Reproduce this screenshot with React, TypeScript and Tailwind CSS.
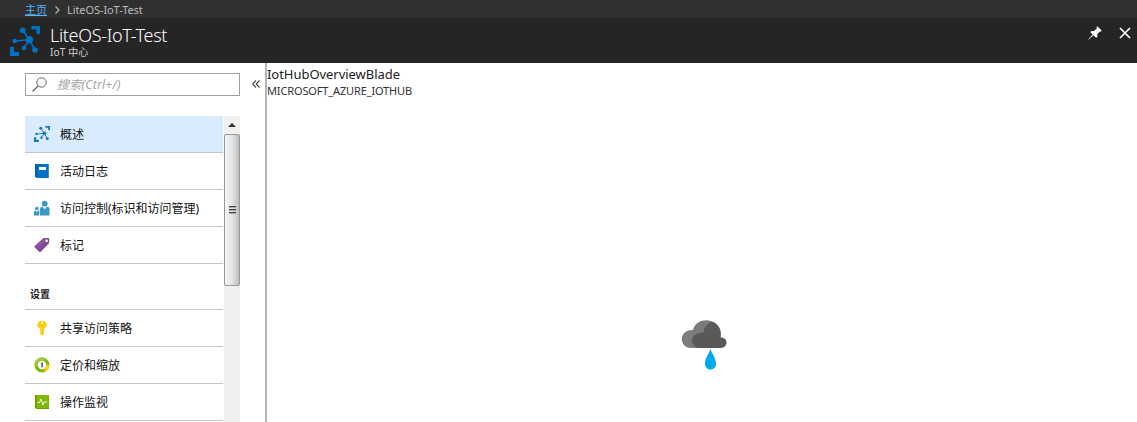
import type { ReactNode } from 'react';

function HubIcon({ className = '', light = false }: { className?: string; light?: boolean }) {
  return (
    <svg viewBox="0 0 30 30" className={className} fill={light ? '#1b78c5' : '#0072c6'}>
      <path d="M21.500 0H30v8h-3.500V3.500h-5zM0 21h4v5h5v4H0z" />
      <path d="M12.700 4.300 19.300 13.700 4.700 15M19.300 13.700 25 24M19.300 13.700 14 22" fill="none" stroke="#0072c6" strokeWidth="1.600" />
      <circle cx="12.700" cy="4.300" r="2.900" />
      <circle cx="19.500" cy="13.700" r="3.600" />
      <circle cx="4.700" cy="15" r="2.300" />
      <circle cx="14" cy="22" r="2.300" />
      <circle cx="25" cy="24" r="2.800" />
    </svg>
  );
}

function BookIcon() {
  return (
    <svg viewBox="0 0 16 16" className="h-4 w-4">
      <path d="M1 1h14v14H2.500L1 13.500z" fill="#0072c6" />
      <path d="M1 1h1.500v13H1z" fill="#005a9e" />
      <path d="M14.500 1v14" stroke="#3b8fd0" />
      <path d="M5 4h7v3H5z" fill="#fff" />
    </svg>
  );
}

function PeopleIcon() {
  return (
    <svg viewBox="0 0 16 16" className="h-4 w-4" fill="#3999c6">
      <circle cx="10.700" cy="3.700" r="2.900" />
      <path d="M6 15.500V9q0-2 2-2h1l1.700 2.500L12.500 7H14q1.500 0 1.500 2v6.500z" />
      <circle cx="2.800" cy="8.500" r="1.800" />
      <path d="M0 15.500V12q0-1.500 1.500-1.500L3 12l1-1.500h1.300v5z" />
    </svg>
  );
}

function TagIcon() {
  return (
    <svg viewBox="0 0 16 16" className="h-4 w-4">
      <path d="M9.500 1H14q1.300 0 1.300 1.400L15 6.300 6.800 14.800q-.8.8-1.600 0L.8 10.600q-.8-.8 0-1.600z" fill="#804998" />
      <path d="m8.500 2-7.700 7q-.8.8 0 1.600L3 12.500 14 1z" fill="#9665ac" opacity=".5" />
      <circle cx="12.700" cy="3.700" r="1.300" fill="#fff" />
    </svg>
  );
}

function KeyIcon() {
  return (
    <svg viewBox="0 0 16 16" className="h-4 w-4">
      <path d="M8 .8c5.500 0 6.500 6 2 7.900v5.200l-2 1.800-1.800-1.700V8.700C1.500 6.800 2.500.8 8 .8z" fill="#fcd116" />
      <circle cx="8" cy="2.800" r="1" fill="#fff" />
      <path d="M5 6h6" stroke="#f0b71a" strokeWidth=".8" />
      <path d="M8.500 8v6" stroke="#efbd25" strokeWidth=".8" />
    </svg>
  );
}

function PricingIcon() {
  return (
    <svg viewBox="0 0 16 16" className="h-4 w-4">
      <circle cx="8" cy="8" r="5.900" fill="#fff" stroke="#7fba00" strokeWidth="3.200" />
      <path d="M13.900 8A5.900 5.900 0 0 1 10.500 13.300" fill="none" stroke="#fcd116" strokeWidth="3.200" />
      <path d="M2.100 9A5.900 5.900 0 0 1 11 2.900" fill="none" stroke="#a0ca46" strokeWidth="3.200" />
      <path d="M9 6.500H7.500v1.300h1.200v1.500H7M8 5.500v5" fill="none" stroke="#333" strokeWidth=".7" />
    </svg>
  );
}

function MonitorIcon() {
  return (
    <svg viewBox="0 0 16 16" className="h-4 w-4">
      <path d="M1 1h14v14H2.500L1 13.500z" fill="#7fba00" />
      <path d="M1 1h1.500v13H1zM2 14h13v1H2.500z" fill="#6a9c00" />
      <path d="M3.500 8.500h2L7 5l2 6 1.200-3H13" fill="none" stroke="#fff" />
    </svg>
  );
}

function NavItem({ icon, label, active = false }: { icon: ReactNode; label: string; active?: boolean }) {
  return (
    <li className={`flex h-[37px] items-center gap-[10px] border-b border-[#c8c8c8] pl-[9px] ${active ? 'bg-[#d9ecff]' : 'bg-white'}`}>
      {icon}
      <span className="whitespace-nowrap pt-[2px] text-[12px] leading-[18px] text-[#111]">{label}</span>
    </li>
  );
}

function Scrollbar() {
  return (
    <div className="flex w-4 shrink-0 flex-col bg-[#f0f0f0]">
      <div className="flex h-[18px] items-center justify-center">
        <svg viewBox="0 0 8 4" className="h-1 w-2"><path d="M4 0 8 4H0z" fill="#333" /></svg>
      </div>
      <div className="flex h-[152px] flex-col items-center justify-center gap-[1px] rounded-[2px] border border-[#979797] bg-linear-to-r from-[#f5f5f5] via-[#e4e4e6] to-[#bcbdc1]">
        <i className="h-[2px] w-[7px] border-b border-[#aaa] bg-[#444]" />
        <i className="h-[2px] w-[7px] border-b border-[#aaa] bg-[#444]" />
        <i className="h-[2px] w-[7px] border-b border-[#aaa] bg-[#444]" />
      </div>
    </div>
  );
}

function Cloud() {
  return (
    <svg viewBox="0 0 46 52" className="ml-[414px] mt-[221px] h-[52px] w-[46px]">
      <path d="M10 28C-2.500 27.500-2.500 9.500 12 10 15-3 36-3 39.500 10.500V28z" fill="#7a7b7d" />
      <path d="M19 28C7.500 27 8 12.500 22.500 12.500 23 8 25.500 4 30.500 1.800 37 4 41 10 39.500 17.500c8-.5 8 10.500 0 10.500z" fill="#58595b" />
      <path d="M29.500 29c1.500 5 5.500 9 5.500 14.500 0 8-11 8-11 0C24 38 28 34 29.500 29z" fill="#00abec" />
    </svg>
  );
}

export default function App() {
  return (
    <div className="flex h-[422px] w-[1137px] flex-col overflow-hidden bg-white font-['Noto_Sans','Noto_Sans_CJK_SC',sans-serif] text-[#222]">
      <nav className="flex h-[18px] shrink-0 items-center bg-[#303030] pl-[25px] pt-[2px] text-[11px] leading-4">
        <a href="#" className="text-[#55b3ff] underline">主页</a>
        <svg viewBox="0 0 5 8" className="ml-2 mr-[7px] h-2 w-[5px]"><path d="m.5.500 3.500 3.500L.5 7.500" fill="none" stroke="#bbb" strokeWidth="1.200" /></svg>
        <span className="text-[11px] tracking-[-0.08px] text-[#bbb]">LiteOS-IoT-Test</span>
      </nav>
      <header className="flex h-[45px] shrink-0 bg-[#252525] text-white">
        <HubIcon className="ml-[10px] mt-2 h-[30px] w-[30px]" />
        <div className="ml-[10px] mt-[6px]">
          <h1 className="text-[18px] font-light leading-[22px] tracking-[-0.32px]">LiteOS-IoT-Test</h1>
          <p className="text-[10px] leading-[13px] tracking-[0.15px] text-[#d0d0d0]">IoT 中心</p>
        </div>
        <div className="ml-auto mr-[6px] mt-[8px] flex items-start gap-[17px]">
          <svg viewBox="0 0 14 14" className="h-[14px] w-[14px]"><path d="M9.300.2 13.800 4.700 12.500 5.700 11.800 5.400 9.300 8.200 9.400 11 8.200 11.800 5.400 9.200.4 13.700.2 13.400 4.600 8.500 2.200 5.900 3.400 4.900 6 5 8.900 2.400 8.400 1.300z" fill="#fff" /></svg>
          <svg viewBox="0 0 12 12" className="mt-[1px] h-3 w-3"><path d="m1 1 10 10M11 1 1 11" stroke="#fff" strokeWidth="1.700" /></svg>
        </div>
      </header>
      <div className="flex min-h-0 flex-1">
        <aside className="w-[267px] shrink-0 overflow-hidden border-r-2 border-[#b5b5b5] pl-[25px] pt-[10px]">
          <div className="flex items-center">
            <div className="flex h-[23px] w-[215px] items-center border border-[#a0a0a0] pl-[6px]">
              <svg viewBox="0 0 15 15" className="h-[15px] w-[15px]" fill="none" stroke="#666"><circle cx="9.500" cy="5.500" r="4.700" /><path d="M6 9 .5 14.500" strokeWidth="1.300" /></svg>
              <span className="ml-[10px] text-[12px] italic leading-4 tracking-[0.28px] text-[#a3a3a3]">搜索(Ctrl+/)</span>
            </div>
            <svg viewBox="0 0 8 8" className="mb-[1px] ml-3 h-2 w-2" fill="none" stroke="#444" strokeWidth="1.100"><path d="M4 .5.700 4 4 7.500M7.500.5 4.200 4l3.300 3.500" /></svg>
          </div>
          <div className="mt-5 flex h-[306px] w-[215px] justify-between">
            <div className="w-[198px]">
              <ul>
                <NavItem active icon={<HubIcon light className="h-4 w-4" />} label="概述" />
                <NavItem icon={<BookIcon />} label="活动日志" />
                <NavItem icon={<PeopleIcon />} label="访问控制(标识和访问管理)" />
                <NavItem icon={<TagIcon />} label="标记" />
              </ul>
              <h2 className="h-[46px] border-b border-[#c8c8c8] pl-[5px] pt-[22px] text-[10px] font-bold leading-4">设置</h2>
              <ul>
                <NavItem icon={<KeyIcon />} label="共享访问策略" />
                <NavItem icon={<PricingIcon />} label="定价和缩放" />
                <NavItem icon={<MonitorIcon />} label="操作监视" />
              </ul>
            </div>
            <Scrollbar />
          </div>
        </aside>
        <main className="min-w-0 flex-1 pt-[3px]">
          <h2 className="text-[13px] leading-[17px] tracking-[-0.04px]">IotHubOverviewBlade</h2>
          <p className="text-[11px] leading-[16px] tracking-[-0.14px] text-[#333]">MICROSOFT_AZURE_IOTHUB</p>
          <Cloud />
        </main>
      </div>
    </div>
  );
}
